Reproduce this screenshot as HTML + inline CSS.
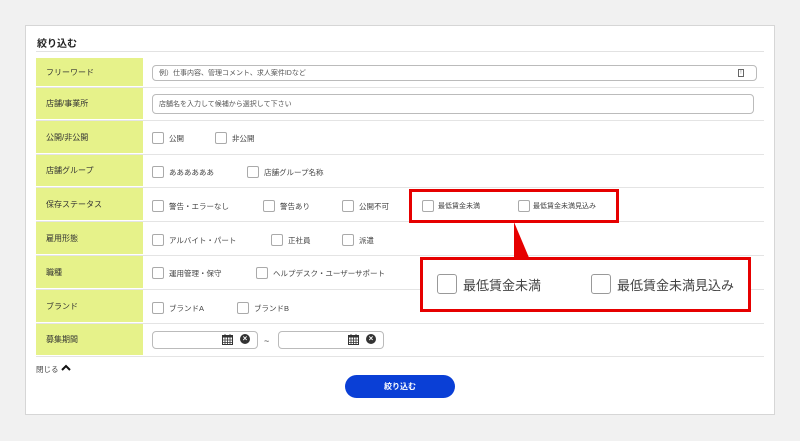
<!DOCTYPE html>
<html><head><meta charset="utf-8"><style>
*{margin:0;padding:0;box-sizing:border-box}
body{width:800px;height:441px;background:#f1f1f1;font-family:"Liberation Sans","Noto Sans CJK JP",sans-serif;position:relative;overflow:hidden;color:#444}
.card{position:absolute;left:25px;top:25px;width:750px;height:390px;background:#fff;border:1px solid #d6d6d6}
.title{position:absolute;left:37px;top:35px;font-size:10px;font-weight:bold;color:#222}
.hl{position:absolute;left:36px;width:728px;height:1px;background:#e2e2e2}
.row{position:absolute;left:36px;width:728px;border-bottom:1px solid #e4e4e4}
.lab{position:absolute;left:0;top:0;bottom:0;width:107px;background:#e6f28a;font-size:8px;color:#333;padding-left:10px;display:flex;align-items:center;border-bottom:1px solid #fff}
.cb{position:absolute;width:12px;height:12px;border:1px solid #aaa;border-radius:2px;background:#fff}
.t{position:absolute;font-size:7.5px;color:#444;white-space:nowrap}
.inp{position:absolute;border:1px solid #bbb;border-radius:4px;background:#fff;font-size:7px;color:#555;padding-left:6px;display:flex;align-items:center}
.red{position:absolute;border:3px solid #e60000}
.big{position:absolute;width:20px;height:20px;border:1px solid #999;border-radius:3px}
.bt{position:absolute;font-size:13px;color:#444;white-space:nowrap}
.x{position:absolute;width:10px;height:10px;border-radius:50%;background:#333;color:#fff;font-size:8px;line-height:10px;text-align:center;font-weight:bold}
</style></head><body>
<div class="card"></div>
<div class="title">絞り込む</div>
<div class="hl" style="top:51px"></div>
<div class="row" style="top:58px;height:30px"><div class="lab">フリーワード</div></div>
<div class="row" style="top:88px;height:33px"><div class="lab">店舗/事業所</div></div>
<div class="row" style="top:121px;height:34px"><div class="lab">公開/非公開</div></div>
<div class="row" style="top:155px;height:33px"><div class="lab">店舗グループ</div></div>
<div class="row" style="top:188px;height:34px"><div class="lab">保存ステータス</div></div>
<div class="row" style="top:222px;height:34px"><div class="lab">雇用形態</div></div>
<div class="row" style="top:256px;height:34px"><div class="lab">職種</div></div>
<div class="row" style="top:290px;height:34px"><div class="lab">ブランド</div></div>
<div class="row" style="top:324px;height:33px"><div class="lab">募集期間</div></div>

<div class="inp" style="left:152px;top:65px;width:605px;height:16px">例）仕事内容、管理コメント、求人案件IDなど<span style="position:absolute;right:12px;top:3px;width:6px;height:8px;border:1px solid #666;font-size:5px;line-height:6px;text-align:center">!</span></div>
<div class="inp" style="left:152px;top:94px;width:602px;height:20px">店舗名を入力して候補から選択して下さい</div>

<div class="cb" style="left:152px;top:132px"></div><div class="t" style="left:169px;top:133px">公開</div>
<div class="cb" style="left:215px;top:132px"></div><div class="t" style="left:232px;top:133px">非公開</div>

<div class="cb" style="left:152px;top:166px"></div><div class="t" style="left:169px;top:167px">ああああああ</div>
<div class="cb" style="left:247px;top:166px"></div><div class="t" style="left:264px;top:167px">店舗グループ名称</div>

<div class="cb" style="left:152px;top:200px"></div><div class="t" style="left:169px;top:201px">警告・エラーなし</div>
<div class="cb" style="left:263px;top:200px"></div><div class="t" style="left:280px;top:201px">警告あり</div>
<div class="cb" style="left:342px;top:200px"></div><div class="t" style="left:359px;top:201px">公開不可</div>
<div class="cb" style="left:422px;top:200px"></div><div class="t" style="left:438px;top:201px;font-size:7px">最低賃金未満</div>
<div class="cb" style="left:518px;top:200px"></div><div class="t" style="left:533px;top:201px;font-size:7px">最低賃金未満見込み</div>

<div class="cb" style="left:152px;top:234px"></div><div class="t" style="left:169px;top:235px">アルバイト・パート</div>
<div class="cb" style="left:271px;top:234px"></div><div class="t" style="left:288px;top:235px">正社員</div>
<div class="cb" style="left:342px;top:234px"></div><div class="t" style="left:359px;top:235px">派遣</div>

<div class="cb" style="left:152px;top:267px"></div><div class="t" style="left:169px;top:268px">運用管理・保守</div>
<div class="cb" style="left:256px;top:267px"></div><div class="t" style="left:273px;top:268px">ヘルプデスク・ユーザーサポート</div>

<div class="cb" style="left:152px;top:302px"></div><div class="t" style="left:169px;top:303px">ブランドA</div>
<div class="cb" style="left:237px;top:302px"></div><div class="t" style="left:254px;top:303px">ブランドB</div>

<div class="inp" style="left:152px;top:331px;width:106px;height:18px"></div>
<svg style="position:absolute;left:222px;top:333px" width="11" height="12"><rect x="0.5" y="2.5" width="10" height="9" fill="#fff" stroke="#333"/><rect x="0.5" y="2.5" width="10" height="2" fill="#333"/><path d="M3 1v3M8 1v3M0 7h11M0 9.5h11M3 4v8M5.5 4v8M8 4v8" stroke="#333" stroke-width="0.8"/></svg>
<div class="x" style="left:240px;top:334px">×</div>
<div class="t" style="left:264px;top:336px;font-size:9px">~</div>
<div class="inp" style="left:278px;top:331px;width:106px;height:18px"></div>
<svg style="position:absolute;left:348px;top:333px" width="11" height="12"><rect x="0.5" y="2.5" width="10" height="9" fill="#fff" stroke="#333"/><rect x="0.5" y="2.5" width="10" height="2" fill="#333"/><path d="M3 1v3M8 1v3M0 7h11M0 9.5h11M3 4v8M5.5 4v8M8 4v8" stroke="#333" stroke-width="0.8"/></svg>
<div class="x" style="left:366px;top:334px">×</div>

<div class="t" style="left:36px;top:364px;font-size:7.5px">閉じる</div>
<svg style="position:absolute;left:61px;top:364px" width="10" height="7"><path d="M1 6L5 2L9 6" stroke="#111" stroke-width="2" fill="none"/></svg>
<div style="position:absolute;left:345px;top:375px;width:110px;height:23px;border-radius:12px;background:#0a3fd6;color:#fff;font-size:8px;font-weight:bold;display:flex;align-items:center;justify-content:center">絞り込む</div>

<div class="red" style="left:409px;top:189px;width:210px;height:34px"></div>
<svg style="position:absolute;left:0;top:0" width="800" height="441"><polygon points="514,222 514,260 530,260" fill="#e60000"/></svg>
<div class="red" style="left:420px;top:257px;width:331px;height:55px;background:#fff"></div>
<div class="big" style="left:437px;top:274px"></div><div class="bt" style="left:463px;top:275px">最低賃金未満</div>
<div class="big" style="left:591px;top:274px"></div><div class="bt" style="left:617px;top:275px">最低賃金未満見込み</div>
</body></html>
